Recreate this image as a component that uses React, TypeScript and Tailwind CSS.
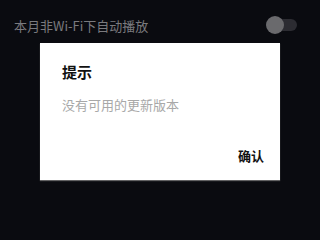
export default function App() {
  return (
    <div
      className="w-[320px] h-[240px] bg-[#0a0b10] overflow-hidden"
      style={{ fontFamily: '"Noto Sans CJK SC", "Noto Sans", sans-serif' }}
    >
      <div className="flex items-center justify-between h-[50px] pl-[14px] pr-[23px]">
        <span className="text-[13px] text-[#7a7a7e] leading-none">本月非Wi-Fi下自动播放</span>
        <div className="relative w-[30px] h-[12px] rounded-full bg-[#2c2c32]">
          <div className="absolute left-[-1px] top-[-3px] w-[18px] h-[18px] rounded-full bg-[#6a6a6d]" />
        </div>
      </div>
      <div className="ml-[40px] mt-[-7px] w-[240px] h-[137px] bg-white shadow-[0_1px_1px_rgba(120,120,120,0.8)] flex flex-col pl-[22px]">
        <div className="mt-[18px] text-[15px] font-bold text-[#111] leading-[22px]">提示</div>
        <div className="mt-[12px] text-[13px] text-[#a8a8a8] leading-[20px]">没有可用的更新版本</div>
        <div className="mt-auto mb-[14px] self-end text-[13px] font-bold text-[#111] leading-[20px] mr-[16px]">确认</div>
      </div>
    </div>
  );
}
